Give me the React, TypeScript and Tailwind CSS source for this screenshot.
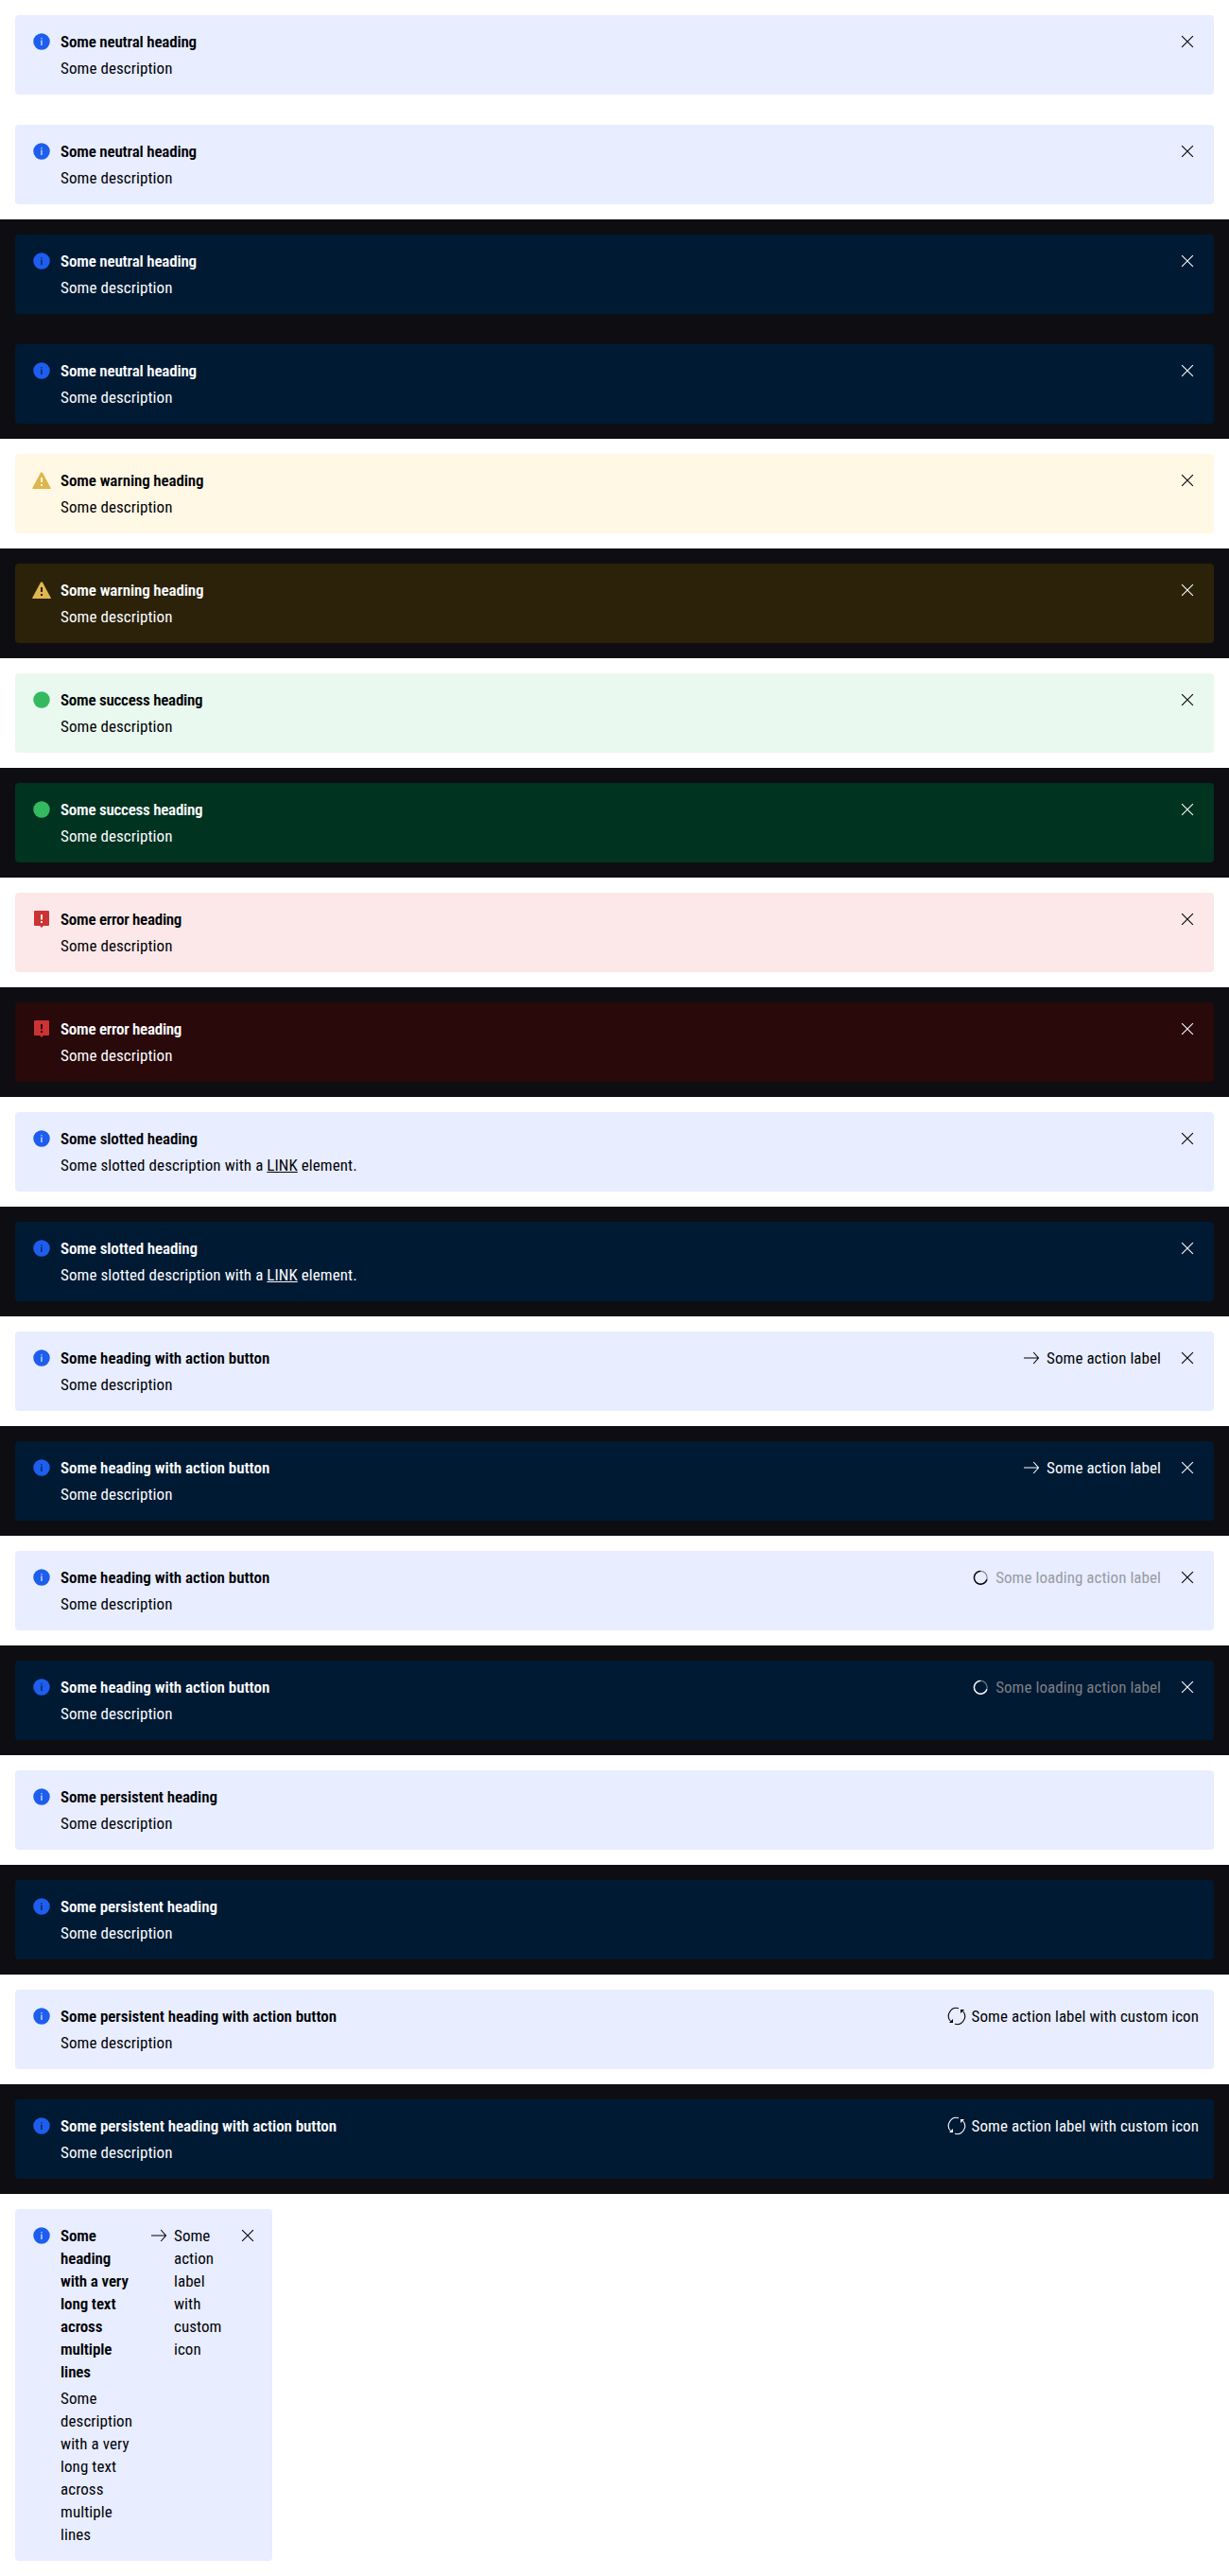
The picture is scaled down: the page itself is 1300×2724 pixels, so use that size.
import React from "react";

type Kind = "info" | "warning" | "success" | "error";

const ICON_PATHS: Record<Kind, React.ReactNode> = {
  info: (
    <path
      fill="#1d5eee"
      fillRule="evenodd"
      d="M12 3.25a8.75 8.75 0 1 0 0 17.5 8.75 8.75 0 0 0 0-17.5Zm-.75 4.9h1.4v1.1h-1.4Zm.1 2.35h1.2V16h-1.2Z"
    />
  ),
  warning: (
    <path
      fill="#dfb54d"
      fillRule="evenodd"
      d="M12 3.2c.4 0 .7.2 1 .6l8.7 16.1c.3.6 0 1.1-.7 1.1H3c-.7 0-1-.5-.7-1.1L11 3.8c.3-.4.6-.6 1-.6Zm-1 5.8v5h2V9Zm0 7v2h2v-2Z"
    />
  ),
  success: <circle cx="12" cy="12" r="8.75" fill="#35b95f" />,
  error: (
    <path
      fill="#cc3333"
      fillRule="evenodd"
      d="M5 3h14a1 1 0 0 1 1 1v14a1 1 0 0 1-1 1h-5l-2 2-2-2H5a1 1 0 0 1-1-1V4a1 1 0 0 1 1-1Zm6 4v5.5h2V7Zm0 7v2h2v-2Z"
    />
  ),
};

function Icon({ children }: { children: React.ReactNode }) {
  return (
    <svg viewBox="0 0 24 24" className="size-6 shrink-0" fill="none">
      {children}
    </svg>
  );
}

const Close = () => (
  <Icon>
    <path d="m6.1 6.1 11.8 11.8M17.9 6.1 6.1 17.9" stroke="currentColor" strokeWidth="1.1" />
  </Icon>
);

const Arrow = () => (
  <Icon>
    <path d="M4 12h15.2M14.2 6l5.3 6-5.3 6" stroke="currentColor" strokeWidth="1.1" />
  </Icon>
);

const Spinner = () => (
  <Icon>
    <circle cx="12.3" cy="12.3" r="6.9" stroke="currentColor" strokeWidth="1.3" opacity="0.4" />
    <path d="M12.3 5.4a6.9 6.9 0 1 0 6.6 8.9" stroke="currentColor" strokeWidth="1.4" />
  </Icon>
);

const Rotate = () => (
  <Icon>
    <path
      d="M14 3.7A8.4 8.4 0 0 0 5.6 17.5M10 20.3A8.4 8.4 0 0 0 18.4 6.5"
      stroke="currentColor"
      strokeWidth="1.1"
    />
    <path d="M16 5h4l-4 4ZM8 19H4l4-4Z" fill="currentColor" />
  </Icon>
);

const BG: Record<Kind, [string, string]> = {
  info: ["bg-[#e8edff]", "bg-[#001a33]"],
  warning: ["bg-[#fff8e5]", "bg-[#2c220a]"],
  success: ["bg-[#e9f9ef]", "bg-[#003320]"],
  error: ["bg-[#fce8e9]", "bg-[#290909]"],
};

type BannerProps = {
  kind?: Kind;
  dark?: boolean;
  heading: string;
  tracking?: string;
  description?: React.ReactNode;
  action?: string;
  icon?: React.ReactNode;
  loading?: boolean;
  persistent?: boolean;
  narrow?: boolean;
};

function Banner({
  kind = "info",
  dark = false,
  heading,
  tracking = "tracking-[-0.12px]",
  description = "Some description",
  action,
  icon = <Arrow />,
  loading,
  persistent,
  narrow,
}: BannerProps) {
  return (
    <div className={`p-4 ${dark ? "bg-[#0e0e12] text-[#fbfcff]" : "bg-white text-[#010205]"}`}>
      <div className={`flex items-start gap-4 rounded p-4 ${BG[kind][dark ? 1 : 0]} ${narrow ? "w-[272px]" : ""}`}>
        <div className={`flex gap-2 ${narrow ? "w-[108px] shrink-0" : "grow"}`}>
          <Icon>{ICON_PATHS[kind]}</Icon>
          <div className="flex flex-col gap-1">
            <h5 className={`font-semibold ${tracking}`}>{heading}</h5>
            <p className="tracking-[0.08px]">{description}</p>
          </div>
        </div>
        {action && (
          <button className={`flex items-start gap-1 text-left ${narrow ? "w-[78px] shrink-0" : ""}`}>
            {loading ? <Spinner /> : icon}
            <span className={`tracking-[0.06px] ${loading ? (dark ? "text-[#7c7f84]" : "text-[#999ba3]") : ""}`}>
              {action}
            </span>
          </button>
        )}
        {!persistent && <Close />}
      </div>
    </div>
  );
}

const linked = (
  <>
    Some slotted description with a <a className="underline underline-offset-1">LINK</a> element.
  </>
);

const neutral: BannerProps = { heading: "Some neutral heading", tracking: "tracking-[-0.18px]" };
const warning: BannerProps = { heading: "Some warning heading", kind: "warning" };
const success: BannerProps = { heading: "Some success heading", kind: "success", tracking: "tracking-[-0.25px]" };
const error: BannerProps = { heading: "Some error heading", kind: "error", tracking: "tracking-[-0.27px]" };
const slotted: BannerProps = { heading: "Some slotted heading", description: linked };
const withAction: BannerProps = {
  heading: "Some heading with action button",
  tracking: "tracking-[-0.03px]",
  action: "Some action label",
};
const loadingAction: BannerProps = { ...withAction, action: "Some loading action label", loading: true };
const persistent: BannerProps = { heading: "Some persistent heading", persistent: true };
const persistentAction: BannerProps = {
  heading: "Some persistent heading with action button",
  tracking: "tracking-[-0.06px]",
  action: "Some action label with custom icon",
  icon: <Rotate />,
  persistent: true,
};

const ROWS: BannerProps[] = [
  neutral,
  neutral,
  { ...neutral, dark: true },
  { ...neutral, dark: true },
  ...[warning, success, error, slotted, withAction, loadingAction, persistent, persistentAction].flatMap((row) => [
    row,
    { ...row, dark: true },
  ]),
  {
    heading: "Some heading with a very long text across multiple lines",
    description: "Some description with a very long text across multiple lines",
    action: "Some action label with custom icon",
    narrow: true,
  },
];

export default function App() {
  return (
    <main className="w-full bg-white font-['Roboto_Condensed',Roboto,sans-serif] text-[17px] leading-6">
      {ROWS.map((row, i) => (
        <Banner key={i} {...row} />
      ))}
    </main>
  );
}
